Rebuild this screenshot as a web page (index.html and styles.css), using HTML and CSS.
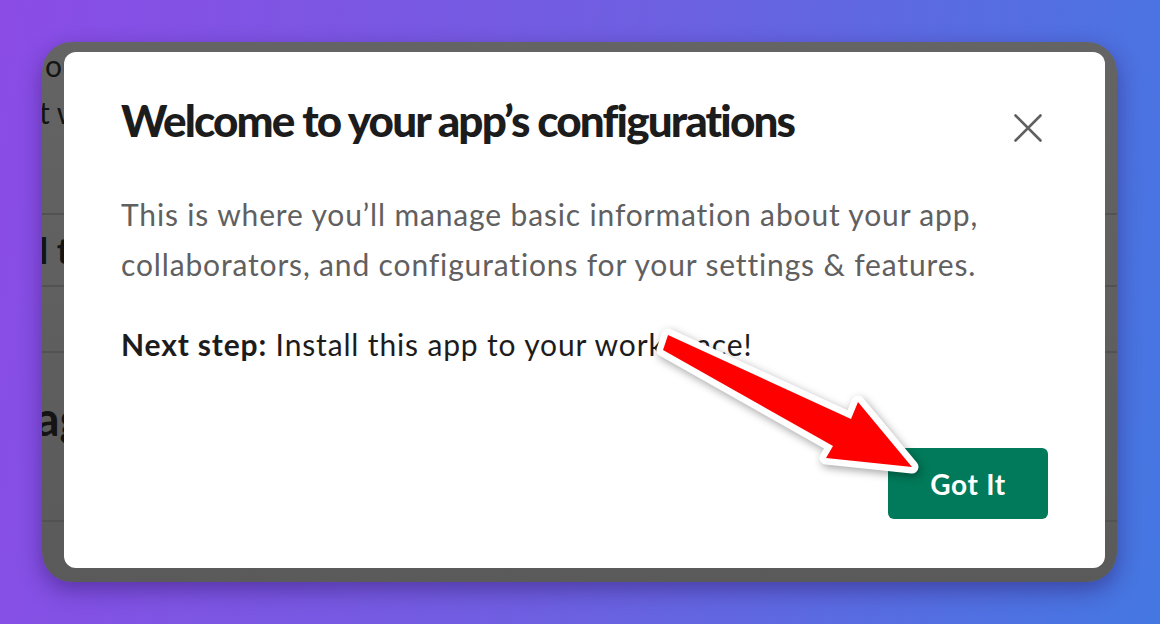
FILE: index.html
```html
<!DOCTYPE html>
<html lang="en">
<head>
  <meta charset="UTF-8" />
  <title>App configurations</title>
  <meta name="viewport" content="width=device-width, initial-scale=1.0"/>
  <link rel="stylesheet" href="styles.css">
</head>
<body>

  <div class="window">
    <div class="page">
      <p class="row row-one">ou can find your app’s settings right here. Click a section in the sidebar and</p>
      <p class="row row-two">t where you want to configure and customize how your app will run on Slack then</p>
      <div class="rule"></div>
      <p class="row row-bold">Install to Workspace</p>
      <div class="rule rule-b"></div>
      <div class="rule"></div>
      <p class="row row-head">Manage Distribution</p>
      <div class="rule"></div>
    </div>

    <div class="modal">
      <div class="modal-head">
        <h1>Welcome to your app’s configurations</h1>
        <button class="close" aria-label="Close">
          <svg width="28" height="28" viewBox="0 0 28 28">
            <path d="M1.5 1.5 L26.5 26.5 M26.5 1.5 L1.5 26.5" />
          </svg>
        </button>
      </div>
      <p class="intro">This is where you’ll manage basic information about your app, collaborators, and configurations for your settings &amp; features.</p>
      <p class="next"><strong>Next step:</strong> Install this app to your workspace!</p>
      <div class="modal-foot">
        <button class="got-it">Got It</button>
      </div>
    </div>
  </div>

  <!-- annotation arrow drawn over the screenshot -->
  <svg class="arrow" width="1160" height="624" viewBox="0 0 1160 624">
    <polygon points="668,335 851,419 858,402 912,467 826,458 833,446 663,350" />
  </svg>

</body>
</html>
```

FILE: styles.css
```css
body {
  margin: 0;
  width: 1160px;
  height: 624px;
  overflow: hidden;
  font-family: Lato, "Noto Sans", sans-serif;
  background: linear-gradient(100deg, #8b4ce6 0%, #6f5fe1 50%, #4477e1 100%);
  position: relative;
}

.window {
  position: relative;
  margin: 42px 43px 42px 42px;
  height: 540px;
  border-radius: 30px;
  overflow: hidden;
  background: linear-gradient(180deg, #646464 0%, #5a5a5a 100%);
  box-shadow: 0 8px 22px rgba(40, 15, 90, 0.45);
}

.page {
  color: #141414;
  white-space: nowrap;
}

.row {
  margin: 0;
  font-size: 30px;
  line-height: 47px;
}

.row-one {
  margin-left: 3px;
  height: 47px;
}

.row-two {
  margin-left: -3px;
  height: 124px;
}

.rule {
  height: 2px;
  background: #525252;
}

.row-bold {
  font-size: 36px;
  font-weight: 700;
  margin-left: -90px;
  height: 70px;
  line-height: 70px;
}

.rule-b {
  margin-bottom: 64px;
}

.row-head {
  font-size: 48px;
  font-weight: 700;
  line-height: 60px;
  margin-left: -103px;
  padding-top: 35px;
  height: 132px;
}

.modal {
  position: absolute;
  left: 22px;
  top: 10px;
  width: 1041px;
  height: 516px;
  box-sizing: border-box;
  padding: 41px 57px 49px 57px;
  background: white;
  border-radius: 12px;
  display: flex;
  flex-direction: column;
  white-space: normal;
}

.modal-head {
  display: flex;
  justify-content: space-between;
  align-items: flex-start;
}

h1 {
  margin: 0;
  font-size: 44px;
  line-height: 55px;
  font-weight: 900;
  color: #1d1c1d;
  letter-spacing: -1.85px;
}

.close {
  margin: 21px 6px 0 0;
  padding: 0;
  border: none;
  background: none;
  width: 28px;
  height: 28px;
}

.close svg {
  display: block;
}

.close path {
  stroke: #616061;
  stroke-width: 2.6;
  stroke-linecap: round;
  fill: none;
}

.intro {
  margin: 41px 0 0 0;
  font-size: 30px;
  line-height: 50px;
  letter-spacing: 0.85px;
  color: #616061;
}

.next {
  margin: 30px 0 0 0;
  font-size: 30px;
  line-height: 50px;
  letter-spacing: 0.85px;
  color: #1d1c1d;
}

.next strong {
  font-weight: 700;
}

.modal-foot {
  margin-top: auto;
  display: flex;
  justify-content: flex-end;
}

.got-it {
  width: 160px;
  height: 71px;
  border: none;
  border-radius: 6px;
  background-color: #007a5a;
  color: white;
  font-family: Lato, "Noto Sans", sans-serif;
  font-size: 28px;
  font-weight: 700;
  letter-spacing: 0.7px;
}

.arrow {
  position: absolute;
  left: 0;
  top: 0;
  pointer-events: none;
  filter: drop-shadow(2px 3px 4px rgba(0, 0, 0, 0.35));
}

.arrow polygon {
  fill: #ff0000;
  stroke: white;
  stroke-width: 13;
  stroke-linejoin: round;
  paint-order: stroke;
}
```
